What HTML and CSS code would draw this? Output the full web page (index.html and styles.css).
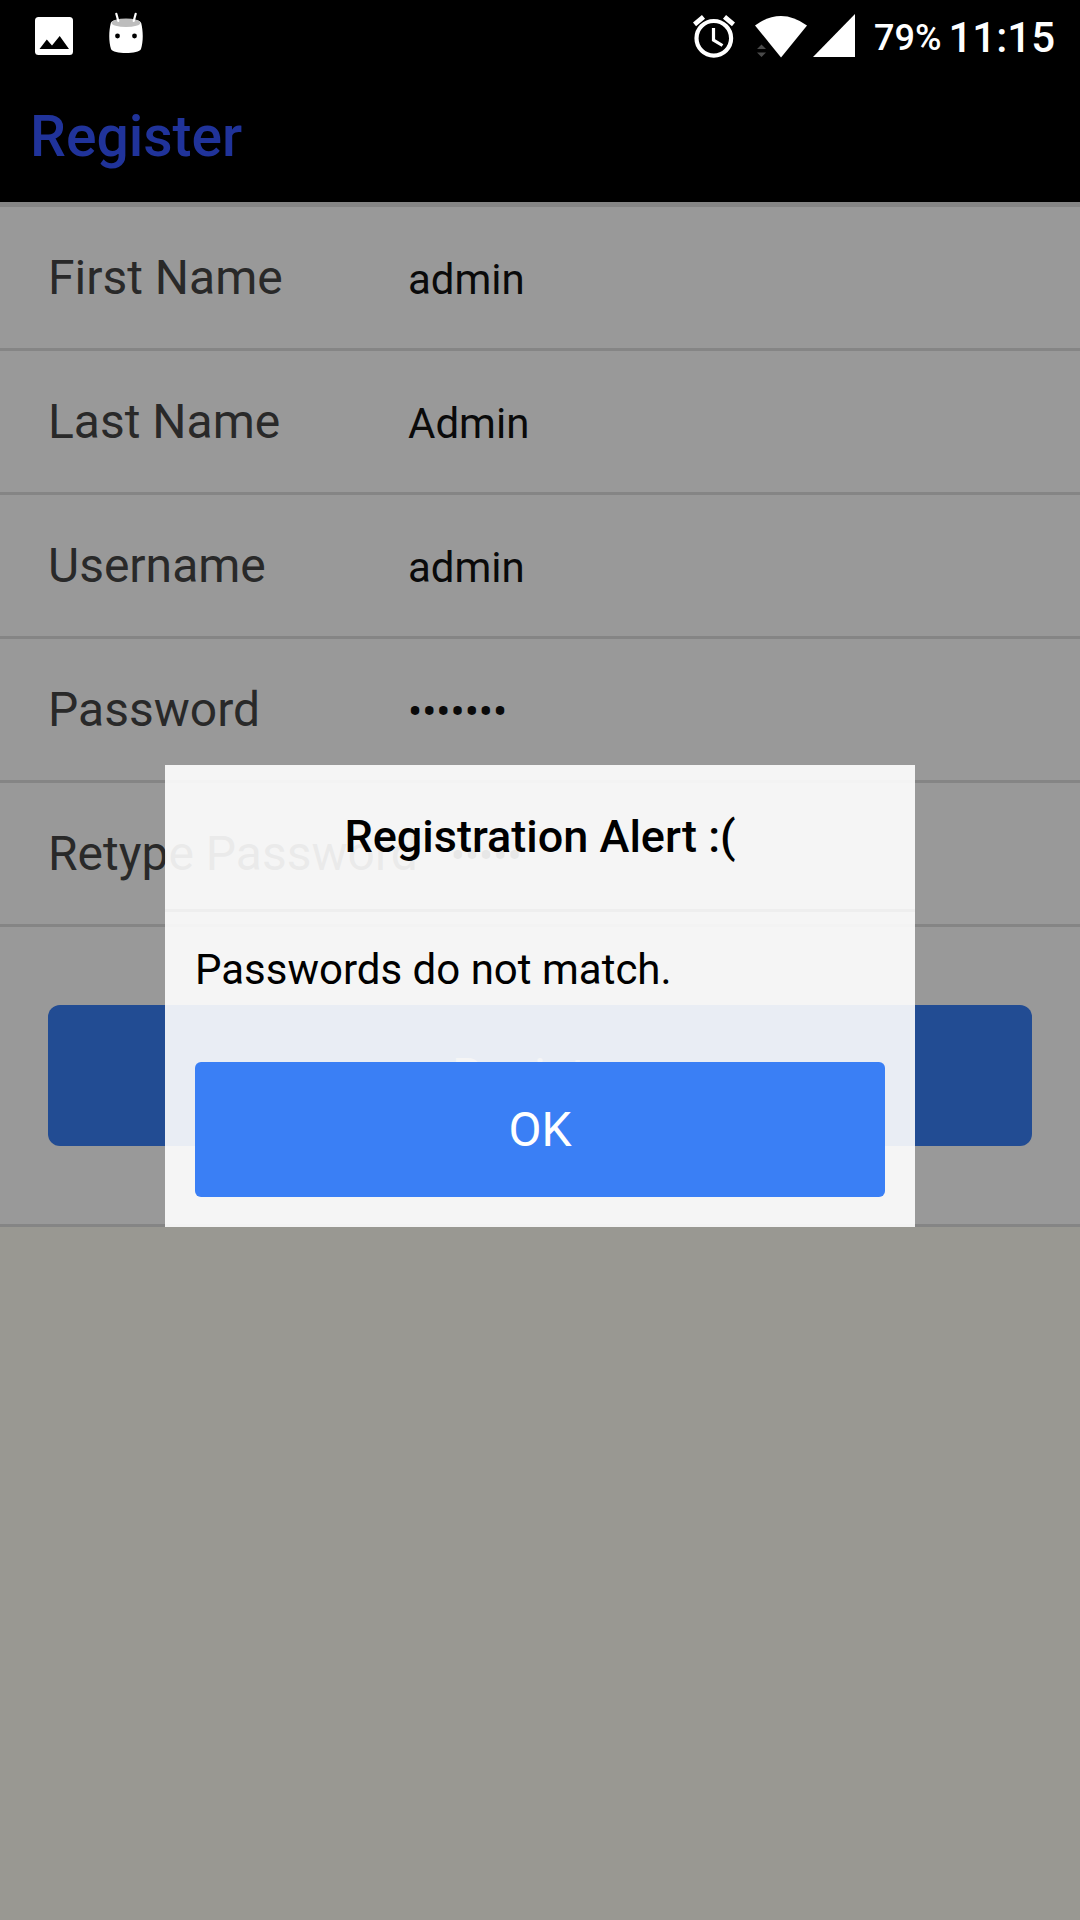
FILE: index.html
```html
<!DOCTYPE html>
<html lang="en">
<head>
<meta charset="utf-8">
<title>Register</title>
<link rel="stylesheet" href="styles.css">
</head>
<body>
<div class="status-bar">
  <div class="notifications">
    <svg class="icon-photo" width="38" height="38" viewBox="0 0 38 38"><rect width="38" height="38" rx="3.500" fill="#fff"/><path d="M4.500 32 11.800 22.500 17 28.500 24.700 19 34 32Z" fill="#000"/></svg>
    <svg class="icon-robot" width="34" height="42" viewBox="0 0 34 42"><path d="M1.800 11C2.500 5.500 31.500 5.500 32.200 11C34.400 20 34.200 30 32 37C30 42.300 4 42.300 2 37C-.2 30-.4 20 1.800 11Z" fill="#fff"/><ellipse cx="17" cy="10.700" rx="14.500" ry="4.300" fill="#bdbdbd"/><path d="M7.300 1.800 9.300 9M26.700 1.800 24.700 9" stroke="#fff" stroke-width="2.200" stroke-linecap="round"/><circle cx="8.500" cy="24" r="2.400"/><circle cx="25.500" cy="24" r="2.400"/></svg>
  </div>
  <div class="system">
    <svg class="icon-alarm" width="42" height="44" viewBox="0 0 42 44"><g fill="none" stroke="#fff"><circle cx="20.800" cy="24.300" r="17.300" stroke-width="4.200"/><path d="M20.500 14V26L29.500 31.500" stroke-width="3.200"/><path d="M1.500 10.300 10.500 2.800M40.500 10.300 31.500 2.800" stroke-width="4.800"/></g></svg>
    <svg class="icon-wifi" width="52" height="43" viewBox="0 0 52 43"><path d="M0 10.500Q26-8.500 52 10.500L26 42.500Z" fill="#fff"/><path d="M2 34 6.500 29.500 11 34ZM2 37.500H11L6.500 42Z" fill="#4a4a4a"/></svg>
    <svg class="icon-signal" width="42" height="43" viewBox="0 0 42 43"><path d="M42 0V43H0Z" fill="#fff"/></svg>
    <span class="battery">79%</span>
    <span class="clock">11:15</span>
  </div>
</div>
<header class="app-bar"><h1>Register</h1></header>
<main class="form">
  <label class="row"><span class="label">First Name</span><span class="value">admin</span></label>
  <label class="row"><span class="label">Last Name</span><span class="value">Admin</span></label>
  <label class="row"><span class="label">Username</span><span class="value">admin</span></label>
  <label class="row"><span class="label">Password</span><span class="value">•••••••</span></label>
  <label class="row"><span class="label">Retype Password</span><span class="value">•••••</span></label>
  <div class="submit"><button class="register" type="button">Register</button></div>
</main>
<div class="popup">
  <h2 class="popup-title">Registration Alert :(</h2>
  <p class="popup-body">Passwords do not match.</p>
  <button class="ok" type="button">OK</button>
</div>
</body>
</html>
```
FILE: styles.css
```css
* { box-sizing: border-box; }

body {
  margin: 0;
  width: 1080px;
  height: 1920px;
  overflow: hidden;
  position: relative;
  background: #999892;
  font-family: Roboto, "Liberation Sans", sans-serif;
}

h1, h2, p { margin: 0; }

button {
  display: block;
  border: 0;
  padding: 0;
  font: inherit;
  font-size: 48px;
}

.status-bar {
  display: flex;
  justify-content: space-between;
  height: 72px;
  padding: 0 25px 0 35px;
  background: #000;
  color: #fff;
}

.notifications, .system { display: flex; align-items: flex-start; }
.icon-photo { margin-top: 17px; }
.icon-robot { margin: 12px 0 0 36px; }
.icon-alarm { margin-top: 14px; }
.icon-wifi { margin: 15px 0 0 20px; }
.icon-signal { margin: 14px 0 0 6px; }

.battery {
  margin: 17px 0 0 19px;
  font-size: 36px;
  font-weight: 500;
  line-height: 42px;
}

.clock {
  margin: 14px 0 0 7px;
  font-size: 42px;
  font-weight: 500;
  line-height: 48px;
}

.app-bar {
  height: 130px;
  padding: 0 30px;
  background: #000;
}

.app-bar h1 {
  color: #20339a;
  font-size: 57px;
  font-weight: 500;
  line-height: 130px;
}

.form {
  background: #999;
  border-top: 5px solid #858585;
}

.row {
  display: flex;
  align-items: center;
  height: 144px;
  padding: 0 48px;
  border-bottom: 3px solid #858585;
}

.label {
  min-width: 360px;
  padding-right: 33px;
  color: #292929;
  font-size: 48px;
  white-space: nowrap;
}

.value {
  padding-top: 4px;
  color: #0a0a0a;
  font-size: 42px;
}

.submit {
  height: 300px;
  padding: 78px 48px;
  border-bottom: 3px solid #858585;
}

.register {
  width: 100%;
  height: 141px;
  border-radius: 12px;
  background: #224c93;
  color: #999;
}

.popup {
  position: absolute;
  left: 165px;
  top: 765px;
  width: 750px;
  height: 462px;
  background: rgba(255, 255, 255, .9);
  color: #000;
}

.popup-title {
  height: 147px;
  border-bottom: 3px solid #eee;
  font-size: 45px;
  font-weight: 500;
  line-height: 143px;
  text-align: center;
}

.popup-body {
  height: 150px;
  padding: 28px 30px;
  font-size: 42px;
  line-height: 60px;
}

.ok {
  width: 690px;
  height: 135px;
  margin: 0 30px;
  border-radius: 6px;
  background: rgba(52, 123, 245, .97);
  color: #fff;
}
```
